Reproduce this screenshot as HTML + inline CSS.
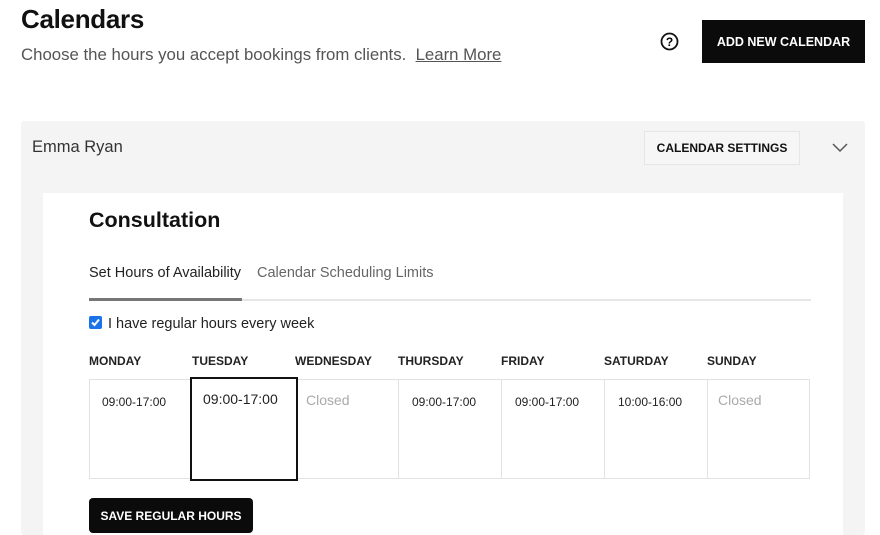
<!DOCTYPE html>
<html><head><style>
*{box-sizing:border-box;margin:0;padding:0}
body{width:880px;height:535px;overflow:hidden;background:#fff;font-family:"Liberation Sans",sans-serif;color:#111;position:relative}
.a{position:absolute}
h1{position:absolute;left:21px;top:4px;font-size:26px;font-weight:bold;letter-spacing:-0.3px}
.sub{left:21px;top:45px;font-size:16.8px;color:#555}
.sub u{color:#555}
.btn{background:#0b0b0b;color:#fff;font-weight:bold;font-size:12.5px;display:flex;align-items:center;justify-content:center}
.day{top:354px;font-size:12px;font-weight:bold;color:#222}
.cell{top:379px;height:100px;width:104px;border:1px solid #e2e2e2;font-size:12px;color:#222}
</style></head><body>
<h1>Calendars</h1>
<div class="a sub">Choose the hours you accept bookings from clients.&nbsp; <u>Learn More</u></div>
<svg class="a" style="left:660px;top:32px" width="19" height="19" viewBox="0 0 19 19"><circle cx="9.5" cy="9.5" r="8" fill="none" stroke="#111" stroke-width="1.8"/><text x="9.5" y="14" font-size="12" font-weight="bold" text-anchor="middle" font-family="Liberation Sans">?</text></svg>
<div class="a btn" style="left:702px;top:20px;width:163px;height:43px">ADD NEW CALENDAR</div>
<div class="a" style="left:21px;top:121px;width:844px;height:414px;background:#f4f4f4;border-radius:3px"></div>
<div class="a" style="left:32px;top:138px;font-size:16.5px;color:#333">Emma Ryan</div>
<div class="a" style="left:644px;top:131px;width:156px;height:34px;border:1px solid #e6e6e6;background:#f6f6f6;font-size:12px;font-weight:bold;display:flex;align-items:center;justify-content:center">CALENDAR SETTINGS</div>
<svg class="a" style="left:832px;top:143px" width="16" height="10"><path d="M1 1 L8 8 L15 1" fill="none" stroke="#555" stroke-width="1.5"/></svg>
<div class="a" style="left:43px;top:193px;width:800px;height:342px;background:#fff"></div>
<div class="a" style="left:89px;top:208px;font-size:21.5px;font-weight:bold">Consultation</div>
<div class="a" style="left:89px;top:265px;font-size:14.5px;color:#222">Set Hours of Availability</div>
<div class="a" style="left:257px;top:265px;font-size:14.5px;color:#666">Calendar Scheduling Limits</div>
<div class="a" style="left:89px;top:299px;width:722px;height:2px;background:#e6e6e6"></div>
<div class="a" style="left:89px;top:298px;width:153px;height:3px;background:#777"></div>
<div class="a" style="left:89px;top:316px;width:13px;height:13px;background:#1a73e8;border-radius:2px"><svg width="13" height="13"><path d="M3 6.5 L5.5 9 L10 3.5" fill="none" stroke="#fff" stroke-width="2"/></svg></div>
<div class="a" style="left:108px;top:316px;font-size:14.5px;color:#222">I have regular hours every week</div>
<div class="a day" style="left:89px">MONDAY</div>
<div class="a day" style="left:192px">TUESDAY</div>
<div class="a day" style="left:295px">WEDNESDAY</div>
<div class="a day" style="left:398px">THURSDAY</div>
<div class="a day" style="left:501px">FRIDAY</div>
<div class="a day" style="left:604px">SATURDAY</div>
<div class="a day" style="left:707px">SUNDAY</div>
<div class="a cell" style="left:89px;padding:15px 0 0 12px">09:00-17:00</div>
<div class="a cell" style="left:295px;padding:12px 0 0 10px;font-size:14px;color:#aaa">Closed</div>
<div class="a cell" style="left:398px;padding:15px 0 0 13px">09:00-17:00</div>
<div class="a cell" style="left:501px;padding:15px 0 0 13px">09:00-17:00</div>
<div class="a cell" style="left:604px;padding:15px 0 0 13px">10:00-16:00</div>
<div class="a cell" style="left:707px;width:103px;padding:12px 0 0 10px;font-size:14px;color:#aaa">Closed</div>
<div class="a" style="left:190px;top:377px;width:108px;height:104px;border:2px solid #111;background:#fff;padding:12px 0 0 11px;font-size:14px;color:#222">09:00-17:00</div>
<div class="a btn" style="left:89px;top:498px;width:164px;height:35px;border-radius:4px;font-size:12px">SAVE REGULAR HOURS</div>
</body></html>
